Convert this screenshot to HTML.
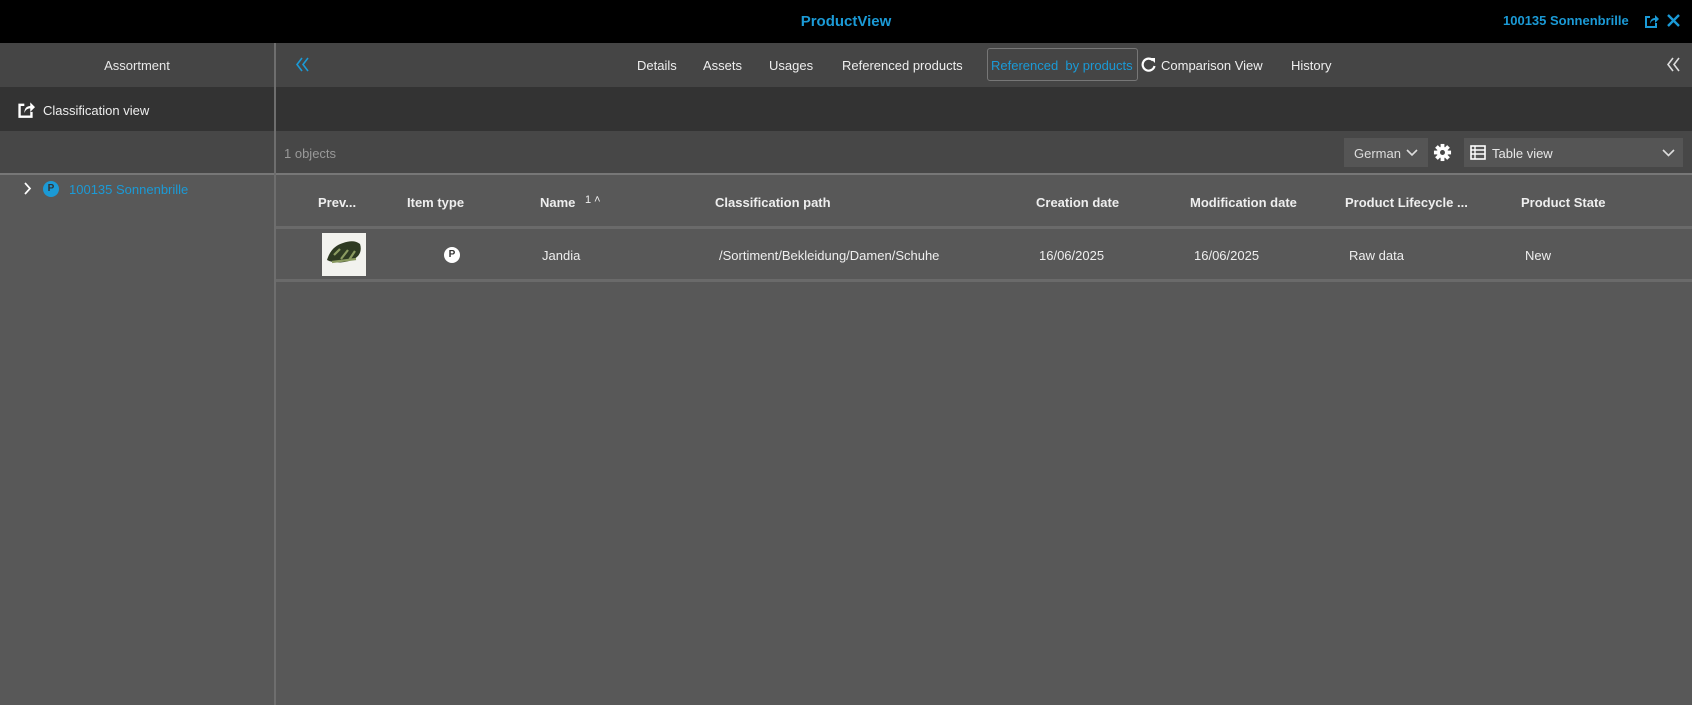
<!DOCTYPE html>
<html><head><meta charset="utf-8">
<style>
*{margin:0;padding:0;box-sizing:border-box}
body{width:1692px;height:705px;overflow:hidden;background:#585858;font-family:"Liberation Sans",sans-serif;font-size:13px;color:#eee;position:relative}
.a{position:absolute;white-space:nowrap}
.blue{color:#1b9ad6}
.b{font-weight:bold}
</style></head><body>
<div class="a" style="left:0;top:0;width:1692px;height:43px;background:#000"></div>
<div class="a b blue" style="left:0;width:1692px;top:13px;text-align:center;font-size:15px">ProductView</div>
<div class="a b blue" style="left:1503px;top:13px;font-size:13px">100135 Sonnenbrille</div>
<svg class="a" style="left:1643px;top:13px" width="16" height="16" viewBox="0 0 16 16"><path d="M2 3h5v2H4v8h8v-3h2v5H2z" fill="#1b9ad6"/><path d="M7 11c0-4 2-6 5-6V2l4 4-4 4V7c-2 0-4 1-5 4z" fill="#1b9ad6"/></svg>
<svg class="a" style="left:1667px;top:14px" width="13" height="13" viewBox="0 0 13 13"><path d="M1 1l11 11M12 1L1 12" stroke="#1b9ad6" stroke-width="2.4"/></svg>

<div class="a" style="left:0;top:43px;width:1692px;height:44px;background:#454545"></div>
<div class="a" style="left:0;width:274px;top:58px;text-align:center;color:#e8e8e8">Assortment</div>
<svg class="a" style="left:296px;top:57px" width="14" height="15" viewBox="0 0 14 15"><path d="M6 1L1 7.5 6 14M12 1L7 7.5 12 14" fill="none" stroke="#1b9ad6" stroke-width="1.6"/></svg>
<div class="a" style="left:637px;top:58px">Details</div>
<div class="a" style="left:703px;top:58px">Assets</div>
<div class="a" style="left:769px;top:58px">Usages</div>
<div class="a" style="left:842px;top:58px">Referenced products</div>
<div class="a" style="left:987px;top:48px;width:151px;height:33px;border:1px solid #777;border-radius:3px"></div>
<div class="a blue" style="left:991px;top:58px">Referenced&nbsp;&nbsp;by products</div>
<svg class="a" style="left:1140px;top:56px" width="17" height="17" viewBox="0 0 17 17"><path d="M13 4.5A6 6 0 1 0 14.5 10" fill="none" stroke="#fff" stroke-width="2.2"/><path d="M10 2h5v5z" fill="#fff"/></svg>
<div class="a" style="left:1161px;top:58px">Comparison View</div>
<div class="a" style="left:1291px;top:58px">History</div>
<svg class="a" style="left:1667px;top:57px" width="14" height="15" viewBox="0 0 14 15"><path d="M6 1L1 7.5 6 14M12 1L7 7.5 12 14" fill="none" stroke="#ddd" stroke-width="1.6"/></svg>

<div class="a" style="left:0;top:87px;width:1692px;height:44px;background:#333"></div>
<svg class="a" style="left:16px;top:100px" width="19" height="19" viewBox="0 0 16 16"><path d="M2 3h5v2H4v8h8v-3h2v5H2z" fill="#fff"/><path d="M7 11c0-4 2-6 5-6V2l4 4-4 4V7c-2 0-4 1-5 4z" fill="#fff"/></svg>
<div class="a" style="left:43px;top:103px">Classification view</div>

<div class="a" style="left:0;top:131px;width:1692px;height:43px;background:#474747"></div>
<div class="a" style="left:284px;top:146px;color:#999">1 objects</div>
<div class="a" style="left:1344px;top:138px;width:84px;height:29px;background:#555"></div>
<div class="a" style="left:1354px;top:146px;color:#ddd">German</div>
<svg class="a" style="left:1406px;top:149px" width="12" height="8" viewBox="0 0 12 8"><path d="M1 1l5 5 5-5" fill="none" stroke="#ddd" stroke-width="1.6"/></svg>
<svg class="a" style="left:1433px;top:143px" width="19" height="19" viewBox="0 0 20 20"><g fill="#fff"><circle cx="10" cy="10" r="6"/><rect x="8" y="1" width="4" height="18"/><rect x="8" y="1" width="4" height="18" transform="rotate(45 10 10)"/><rect x="8" y="1" width="4" height="18" transform="rotate(90 10 10)"/><rect x="8" y="1" width="4" height="18" transform="rotate(135 10 10)"/></g><circle cx="10" cy="10" r="2.6" fill="#474747"/></svg>
<div class="a" style="left:1464px;top:138px;width:219px;height:29px;background:#555"></div>
<svg class="a" style="left:1470px;top:145px" width="16" height="15" viewBox="0 0 16 15"><rect x="1" y="1" width="14" height="13" fill="none" stroke="#fff" stroke-width="1.6"/><path d="M1 5h14M1 9h14M5 1v13" stroke="#fff" stroke-width="1.4"/></svg>
<div class="a" style="left:1492px;top:146px;color:#e8e8e8">Table view</div>
<svg class="a" style="left:1662px;top:149px" width="13" height="8" viewBox="0 0 13 8"><path d="M1 1l5.5 5.5L12 1" fill="none" stroke="#ddd" stroke-width="1.6"/></svg>
<div class="a" style="left:0;top:173px;width:1692px;height:2px;background:#777"></div>

<div class="a" style="left:274px;top:43px;width:2px;height:662px;background:#6e6e6e"></div>

<svg class="a" style="left:24px;top:182px" width="8" height="13" viewBox="0 0 8 13"><path d="M1 1l5 5.5L1 12" fill="none" stroke="#fff" stroke-width="1.7"/></svg>
<div class="a" style="left:43px;top:181px;width:16px;height:16px;border-radius:50%;background:#1b9ad6;color:#333;font-size:10px;text-align:center;line-height:16px;font-weight:bold">P</div>
<div class="a blue" style="left:69px;top:182px">100135 Sonnenbrille</div>

<div class="a b" style="left:318px;top:195px">Prev...</div>
<div class="a b" style="left:407px;top:195px">Item type</div>
<div class="a b" style="left:540px;top:195px">Name</div>
<div class="a" style="left:585px;top:194px;font-size:11px">1 ˄</div>
<div class="a b" style="left:715px;top:195px">Classification path</div>
<div class="a b" style="left:1036px;top:195px">Creation date</div>
<div class="a b" style="left:1190px;top:195px">Modification date</div>
<div class="a b" style="left:1345px;top:195px">Product Lifecycle ...</div>
<div class="a b" style="left:1521px;top:195px">Product State</div>
<div class="a" style="left:276px;top:226px;width:1416px;height:3px;background:#6a6a6a"></div>

<div class="a" style="left:322px;top:233px;width:44px;height:43px;background:#f2f2ee"></div>
<svg class="a" style="left:324px;top:238px" width="40" height="34" viewBox="0 0 40 34"><path d="M3 22c3-10 9-15 16-17 6-2 12-3 17 1 2 6 0 12-6 15-8 4-20 5-27 1z" fill="#2e3a22"/><path d="M10 17l6-6M17 21l7-9M25 22l6-9M8 24l24-3" stroke="#8a9a60" stroke-width="2.2"/></svg>
<div class="a" style="left:444px;top:247px;width:16px;height:16px;border-radius:50%;background:#fff;color:#333;font-size:10px;text-align:center;line-height:16px;font-weight:bold">P</div>
<div class="a" style="left:542px;top:248px">Jandia</div>
<div class="a" style="left:719px;top:248px">/Sortiment/Bekleidung/Damen/Schuhe</div>
<div class="a" style="left:1039px;top:248px">16/06/2025</div>
<div class="a" style="left:1194px;top:248px">16/06/2025</div>
<div class="a" style="left:1349px;top:248px">Raw data</div>
<div class="a" style="left:1525px;top:248px">New</div>
<div class="a" style="left:276px;top:279px;width:1416px;height:3px;background:#6a6a6a"></div>
</body></html>
